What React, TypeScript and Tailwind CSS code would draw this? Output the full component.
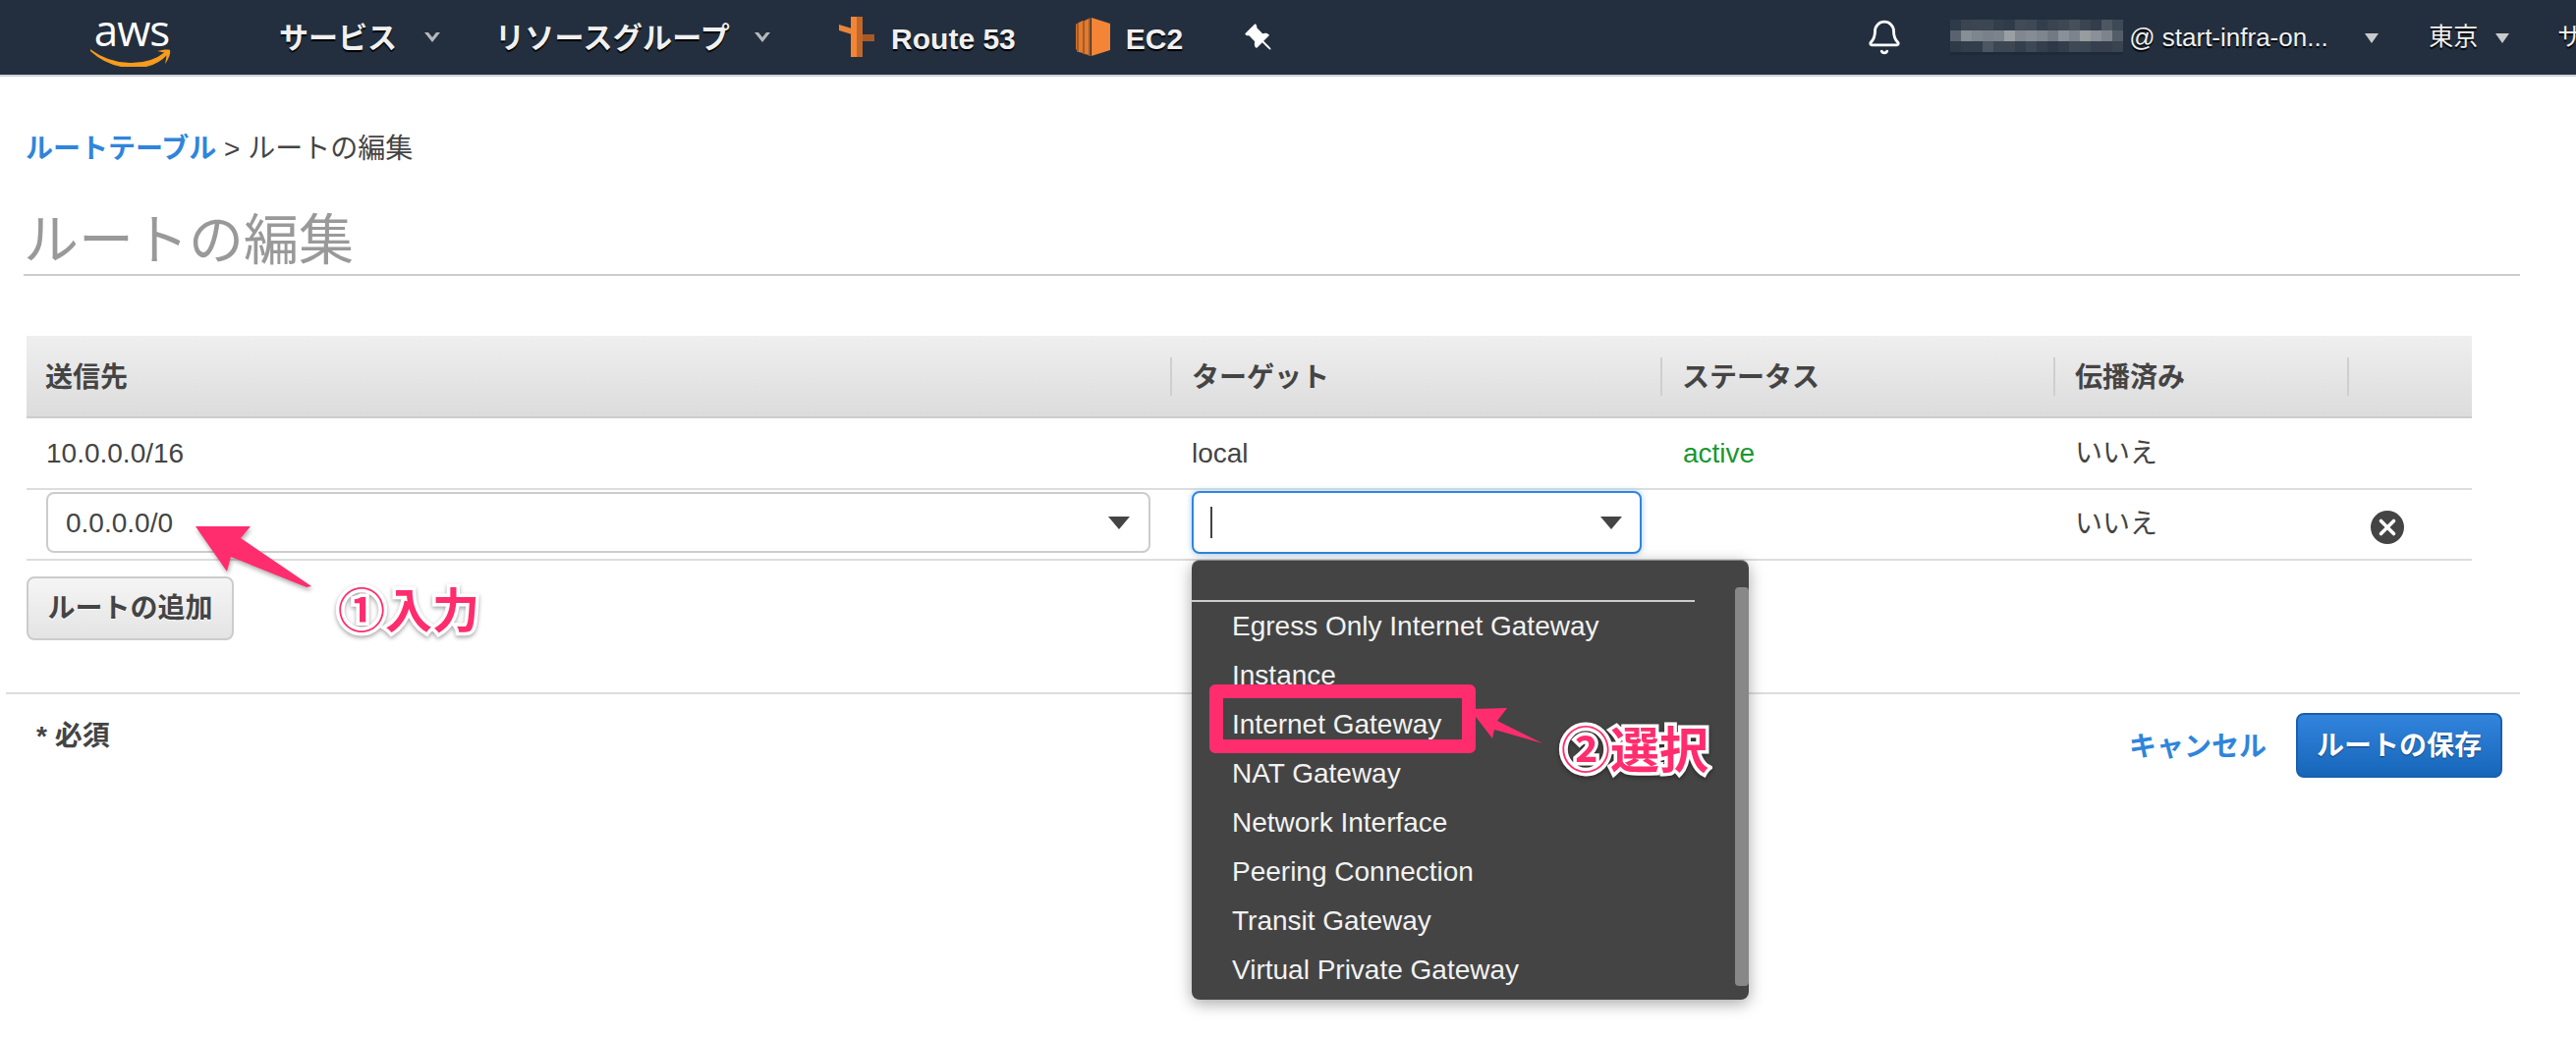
import { Bell } from "lucide-react";
import { BsPinAngleFill } from "react-icons/bs";

const mosaic = [
  ["#2f3a48", "#3b4552", "#3c4653", "#3c4653", "#323e4b", "#2f3b49", "#414b58", "#3f4956", "#333e4c", "#3a4450", "#3e4855", "#46505b", "#3b4552", "#333e4c", "#4d5762", "#3f4956"],
  ["#596370", "#868e96", "#7d858e", "#78808a", "#7b838c", "#9a9fa3", "#80878f", "#858c94", "#7d858e", "#717983", "#8a9099", "#7c838c", "#979c9f", "#8a9098", "#7c838d", "#535d69"],
  ["#2e3a48", "#333e4c", "#333e4c", "#4c5662", "#3d4754", "#3d4754", "#343f4d", "#3e4855", "#343f4d", "#2d3947", "#333e4c", "#3f4956", "#3d4754", "#363f4d", "#373f4d", "#3a4350"],
];

const targets = [
  "Egress Only Internet Gateway",
  "Instance",
  "Internet Gateway",
  "NAT Gateway",
  "Network Interface",
  "Peering Connection",
  "Transit Gateway",
  "Virtual Private Gateway",
];

const NavCaret = ({ className }: { className: string }) => (
  <svg className={className} width="18" height="12" viewBox="0 0 18 12">
    <path d="M1 1 L9 11 L17 1 L13 1 L9 6 L5 1 Z" fill="#b4b8bc" />
  </svg>
);

const SmallCaret = ({ className }: { className: string }) => (
  <svg className={className} width="14" height="11" viewBox="0 0 14 11">
    <path d="M0 1 H14 L7 11 Z" fill="#c8cacc" />
  </svg>
);

const SelectArrow = () => (
  <svg className="shrink-0" width="22" height="13" viewBox="0 0 22 13">
    <path d="M0 0 H22 L11 13 Z" fill="#444444" />
  </svg>
);

const AwsLogo = () => (
  <div className="relative w-[84px] h-[60px] shrink-0">
    <span className="block text-center text-white text-[44px] leading-[44px] tracking-[-1px] [text-shadow:none] font-['Open_Sans','Liberation_Sans',sans-serif]">
      aws
    </span>
    <svg className="absolute left-0 top-[34px]" width="84" height="26" viewBox="0 0 84 26">
      <path d="M0 9 C24 27 58 27 77 11 L78 13 C60 33 22 30 0 9 Z" fill="#f79c1c" stroke="#f79c1c" strokeWidth="1.5" />
      <path d="M68 10 C73 9 78 8 81 9 C82 13 79 19 76 23 C77 18 78 14 77 12 C75 11 71 11 68 10 Z" fill="#f79c1c" />
    </svg>
  </div>
);

const Route53Icon = () => (
  <svg className="shrink-0" width="38" height="42" viewBox="0 0 38 42">
    <path d="M1 8 L14 12 V18 L1 14 Z" fill="#e8853a" />
    <path d="M25 18 H37 V25 H25 Z" fill="#a85a26" />
    <rect x="13" y="0" width="6" height="41" fill="#f58536" />
    <rect x="19" y="0" width="6" height="41" fill="#c0682c" />
  </svg>
);

const Ec2Icon = () => (
  <svg className="shrink-0" width="36" height="40" viewBox="0 0 36 40">
    <path d="M16 0 L35 6 V33 L16 39 Z" fill="#f58536" />
    <path d="M13 1 V38 L9 37 V3 Z" fill="#e07b30" />
    <path d="M7 3 V36 L3 35 V5 Z" fill="#e07b30" />
    <path d="M1 6 V33 L0 32 V7 Z" fill="#d0702a" />
    <path d="M15 0 V39 H13 V1 Z M9 3 V37 H7 V3 Z M3 5 V35 H1 V6 Z" fill="#a85a26" />
  </svg>
);

const HeaderCell = ({ label, first }: { label: string; first?: boolean }) => (
  <div className="flex items-center h-full">
    {!first && <div className="w-[2px] h-[39px] bg-[#cfcfcf] shrink-0" />}
    <span className={first ? "ml-[19px] pt-[3px] font-bold" : "ml-[20px] pt-[3px] font-bold"}>{label}</span>
  </div>
);

const Mosaic = () => (
  <div className="ml-[48px] mr-[6px] flex flex-col w-[176px] shrink-0 bg-[#1e2a38]">
    {mosaic.map((row, r) => (
      <div key={r} className="flex h-[11px]">
        {row.map((c, i) => (
          <div key={i} className="w-[11px] h-[11px]" style={{ backgroundColor: c }} />
        ))}
      </div>
    ))}
    <div className="h-[3px]" />
  </div>
);

const NavBar = () => (
  <nav className="flex items-center h-[78px] border-b-2 border-[#ccd0d4] bg-[#232f3e] pl-[92px] text-[#f0f0f0] whitespace-nowrap overflow-hidden [text-shadow:0_2px_1px_#000]">
    <AwsLogo />
    <span className="ml-[108px] text-[30px] font-bold">サービス</span>
    <NavCaret className="ml-[27px] shrink-0" />
    <span className="ml-[55px] text-[30px] font-bold tracking-[0.3px]">リソースグループ</span>
    <NavCaret className="ml-[24px] shrink-0" />
    <div className="ml-[68px]">
      <Route53Icon />
    </div>
    <span className="ml-[16px] pt-[3px] text-[30px] font-bold">Route 53</span>
    <div className="ml-[61px]">
      <Ec2Icon />
    </div>
    <span className="ml-[15px] pt-[3px] text-[30px] font-bold">EC2</span>
    <BsPinAngleFill className="ml-[62px] shrink-0 text-white -scale-x-100" size={30} />
    <Bell className="ml-[603px] shrink-0 text-white" size={38} strokeWidth={1.8} />
    <Mosaic />
    <span className="text-[26px] font-normal w-[212px] shrink-0 overflow-hidden">@ start-infra-on...</span>
    <SmallCaret className="ml-[28px] shrink-0" />
    <span className="ml-[51px] text-[25px]">東京</span>
    <SmallCaret className="ml-[18px] shrink-0" />
    <span className="ml-[49px] text-[25px]">サ</span>
  </nav>
);

const RouteTable = () => (
  <div className="ml-[27px] mt-[61px] w-[2489px] text-[28px] text-[#444]">
    <div className="grid grid-cols-[1164px_499px_400px_299px_127px] h-[84px] border-b-2 border-[#ccc] bg-gradient-to-b from-[#efefef] to-[#dcdcdc]">
      <HeaderCell label="送信先" first />
      <HeaderCell label="ターゲット" />
      <HeaderCell label="ステータス" />
      <HeaderCell label="伝播済み" />
      <HeaderCell label="" />
    </div>
    <div className="grid grid-cols-[1186px_500px_399px_404px] items-center h-[73px] border-b-2 border-[#ddd]">
      <span className="pl-[20px]">10.0.0.0/16</span>
      <span>local</span>
      <span className="text-[#16982f]">active</span>
      <span>いいえ</span>
    </div>
    <div className="flex h-[72px] border-b-2 border-[#ddd]">
      <div className="ml-[20px] mt-[2px] flex items-center justify-between w-[1124px] h-[62px] pl-[18px] pr-[19px] bg-white border-2 border-[#ccc] rounded-[8px]">
        <span className="pt-[2px]">0.0.0.0/0</span>
        <SelectArrow />
      </div>
      <div className="ml-[42px] mt-[1px] flex items-center justify-between w-[458px] h-[64px] pl-[17px] pr-[18px] bg-white border-2 border-[#2f85dc] rounded-[8px] shadow-[0_0_6px_#9fc8f0]">
        <div className="w-[2px] h-[32px] bg-[#444]" />
        <SelectArrow />
      </div>
      <span className="ml-[441px] mt-[14px]">いいえ</span>
      <svg className="ml-[217px] mt-[21px] shrink-0" width="34" height="34" viewBox="0 0 34 34">
        <circle cx="17" cy="17" r="17" fill="#444" />
        <path d="M10.5 10.5 L23.5 23.5 M23.5 10.5 L10.5 23.5" stroke="#fff" strokeWidth="3.6" strokeLinecap="round" />
      </svg>
    </div>
    <button className="mt-[16px] block w-[211px] h-[65px] rounded-[8px] border-2 border-[#ccc] bg-gradient-to-b from-[#f5f5f5] to-[#e4e4e4] font-bold text-[#444] [text-shadow:0_1px_0_#fff]">
      ルートの追加
    </button>
  </div>
);

const TargetMenu = () => (
  <div className="absolute left-[1213px] top-[570px] w-[567px] h-[448px] rounded-[8px] bg-[#444] border-t border-[#888] shadow-[0_4px_16px_rgba(0,0,0,0.35)] text-[28px] text-[#f2f2f2] overflow-hidden">
    <div className="h-[40px] w-[512px] border-b-2 border-[#ccc] box-content" />
    {targets.map((t) => (
      <div key={t} className="flex items-center h-[50px] pl-[41px] leading-none">
        {t}
      </div>
    ))}
    <div className="absolute right-0 top-[27px] w-[14px] h-[406px] rounded-[4px] bg-[#888]" />
  </div>
);

const Annotations = () => (
  <>
    <svg className="absolute left-[190px] top-[528px]" width="140" height="80" viewBox="0 0 140 80">
      <path d="M9 8 L65 8 L55 20 L127 69 L122 70 L45 39 L41 54 Z" fill="#ff2d6e" className="drop-shadow-[1px_3px_2px_rgba(0,0,0,0.3)]" />
    </svg>
    <div className="absolute left-[344px] top-[587px] text-[48px] leading-[72px] font-bold text-[#ff2d6e] [paint-order:stroke_fill] [-webkit-text-stroke:7px_white] [filter:drop-shadow(0_2px_2px_rgba(0,0,0,0.35))]">
      ①入力
    </div>
    <div className="absolute left-[1231px] top-[697px] w-[271px] h-[70px] rounded-[6px] border-[14px] border-[#ff2d6e]" />
    <svg className="absolute left-[1490px] top-[712px]" width="90" height="54" viewBox="0 0 90 54">
      <path d="M6 10 L44 9 L34 22 L80 45 L31 31 L29 40 Z" fill="#ff2d6e" />
    </svg>
    <div className="absolute left-[1589px] top-[727px] text-[50px] leading-[76px] font-bold text-[#ff2d6e] [paint-order:stroke_fill] [-webkit-text-stroke:7px_white] [filter:drop-shadow(0_2px_2px_rgba(0,0,0,0.35))]">
      ②選択
    </div>
  </>
);

export default function App() {
  return (
    <div className="relative w-[2622px] h-[1056px] overflow-hidden bg-white antialiased font-['Liberation_Sans','Noto_Sans_CJK_JP',sans-serif]">
      <NavBar />
      <div className="pt-[54px] pl-[26px] h-[40px] box-content text-[28px] leading-[40px] text-[#444]">
        <span className="font-bold text-[#2f85dc]">ルートテーブル</span> &gt; ルートの編集
      </div>
      <h1 className="mt-[36px] ml-[24px] w-[2541px] h-[73px] border-b-2 border-[#ccc] text-[56px] leading-[73px] text-[#999]">
        ルートの編集
      </h1>
      <RouteTable />
      <div className="mt-[53px] ml-[6px] w-[2559px] flex justify-between border-t-2 border-[#ddd] pr-[18px] pt-[19px] text-[28px]">
        <span className="ml-[31px] mt-[4px] font-bold text-[#444] leading-[40px]">* 必須</span>
        <div className="flex items-center gap-[30px]">
          <span className="pt-[3px] font-bold text-[#2f85dc]">キャンセル</span>
          <button className="w-[210px] h-[66px] pt-[2px] rounded-[8px] border-2 border-[#1a5fae] bg-gradient-to-b from-[#3284dc] to-[#1666ba] font-bold text-white [text-shadow:0_1px_1px_#0b3a70]">
            ルートの保存
          </button>
        </div>
      </div>
      <TargetMenu />
      <Annotations />
    </div>
  );
}
